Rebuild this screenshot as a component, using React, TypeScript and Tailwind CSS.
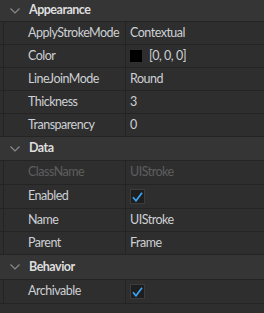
import React from "react";

const Chevron = () => (
  <svg width="10" height="6" viewBox="0 0 10 6" className="shrink-0">
    <path d="M0.5 0.5 L5 5 L9.5 0.5" fill="none" stroke="#8a8a8a" strokeWidth="1.2" />
  </svg>
);

const Check = () => (
  <div className="w-[15px] h-[15px] bg-[#1e1e1e] border border-[#3c3c3c] flex items-center justify-center">
    <svg width="11" height="10" viewBox="0 0 11 10">
      <path d="M1 5.2 L4 8.8 L10 0.8" fill="none" stroke="#3ca4f5" strokeWidth="1.7" />
    </svg>
  </div>
);

const Header = ({ title, h }: { title: string; h: string }) => (
  <div className={`flex items-center bg-[#353535] border-b border-[#242424] ${h}`}>
    <div className="w-[29px] flex justify-center pl-[1px]">
      <Chevron />
    </div>
    <span className="font-bold text-[#dedede]">{title}</span>
  </div>
);

const Row = ({
  label,
  children,
  disabled,
  h = "h-[23px]",
}: {
  label: string;
  children?: React.ReactNode;
  disabled?: boolean;
  h?: string;
}) => (
  <div className={`flex border-b border-[#242424] bg-[#2e2e2e] ${h}`}>
    <div className="w-[4px] bg-[#2e2e2e] border-r border-[#242424]" />
    <div
      className={`w-[122px] pl-[24px] flex items-center border-r border-[#242424] whitespace-nowrap overflow-hidden ${
        disabled ? "text-[#5e5e5e]" : "text-[#cdd0d4]"
      }`}
    >
      {label}
    </div>
    <div
      className={`flex-1 pl-[4px] flex items-center ${
        disabled ? "text-[#5e5e5e]" : "text-[#cdd0d4]"
      }`}
    >
      {children}
    </div>
  </div>
);

export default function App() {
  return (
    <div
      className="w-[264px] h-[313px] bg-[#2e2e2e] overflow-hidden text-[12.5px] leading-none tracking-[-0.5px]"
      style={{ fontFamily: "Lato, 'Noto Sans', sans-serif" }}
    >
      <Header title="Appearance" h="h-[22px]" />
      <Row label="ApplyStrokeMode">Contextual</Row>
      <Row label="Color">
        <div className="w-[12px] h-[12px] bg-black mr-[7px]" />
        [0, 0, 0]
      </Row>
      <Row label="LineJoinMode">Round</Row>
      <Row label="Thickness">3</Row>
      <Row label="Transparency">0</Row>
      <Header title="Data" h="h-[24px]" />
      <Row label="ClassName" disabled h="h-[24px]">
        UIStroke
      </Row>
      <Row label="Enabled" h="h-[24px]">
        <Check />
      </Row>
      <Row label="Name">UIStroke</Row>
      <Row label="Parent">Frame</Row>
      <Header title="Behavior" h="h-[25px]" />
      <Row label="Archivable" h="h-[24px]">
        <Check />
      </Row>
    </div>
  );
}
